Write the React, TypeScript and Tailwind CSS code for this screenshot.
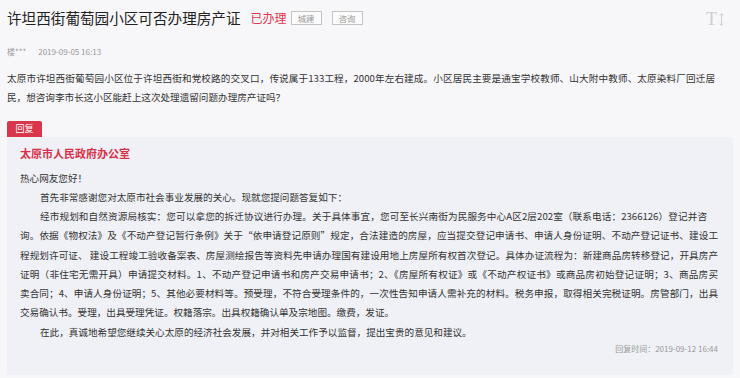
import React from "react";

const F = { fontFamily: '"Noto Sans CJK SC", "Noto Sans", sans-serif' };

export default function App() {
  return (
    <div
      className="w-[740px] h-[378px] bg-[#f7f6f9] px-[7px] pt-[8px] overflow-hidden text-[#333]"
      style={F}
    >
      {/* header */}
      <div className="flex items-center h-[20px]">
        <div className="text-[14.6px] leading-[20px] text-[#222] whitespace-nowrap">
          许坦西街葡萄园小区可否办理房产证
        </div>
        <div className="ml-[10px] text-[12px] leading-[20px] text-[#e6344d] whitespace-nowrap">
          已办理
        </div>
        <div className="ml-[4px] w-[31px] h-[14px] border border-[#c4c4c4] bg-[#fbfbfb] text-[8.4px] leading-[12px] text-[#999] flex items-center justify-center">
          城建
        </div>
        <div className="ml-[10px] w-[31px] h-[14px] border border-[#c4c4c4] bg-[#fbfbfb] text-[8.4px] leading-[12px] text-[#999] flex items-center justify-center">
          咨询
        </div>
        <div className="ml-auto mr-[9px] mt-[2px] flex items-end gap-[2px] text-[#cfcfcf]">
          <span
            className="text-[18px] leading-[18px]"
            style={{ fontFamily: '"Liberation Serif", serif' }}
          >
            T
          </span>
          <svg width="5" height="13" viewBox="0 0 5 13" className="mb-[2px]">
            <path d="M2.5 0.5 L2.5 12.5" stroke="#cfcfcf" strokeWidth="1" />
            <path d="M0.8 2.5 L2.5 0.5 L4.2 2.5" stroke="#cfcfcf" strokeWidth="0.9" fill="none" />
            <path d="M0.8 10.5 L2.5 12.5 L4.2 10.5" stroke="#cfcfcf" strokeWidth="0.9" fill="none" />
          </svg>
        </div>
      </div>

      {/* meta */}
      <div className="mt-[17px] flex text-[8px] leading-[14px] text-[#999]">
        <span>楼***</span>
        <span className="ml-[12px]">2019-09-05 16:13</span>
      </div>

      {/* question */}
      <div className="mt-[9.5px] text-[9.6px] leading-[19px] text-[#333]">
        <div className="w-[708px] whitespace-nowrap text-justify [text-align-last:justify]">
          太原市许坦西街葡萄园小区位于许坦西街和党校路的交叉口，传说属于133工程，2000年左右建成。小区居民主要是通宝学校教师、山大附中教师、太原染料厂回迁居
        </div>
        <div className="whitespace-nowrap">
          民，想咨询李市长这小区能赶上这次处理遗留问题办理房产证吗？
        </div>
      </div>

      {/* reply tag */}
      <div className="mt-[14.5px] w-[35px] h-[16px] bg-[#d9354c] rounded-t-[2px] text-white text-[9px] leading-[16px] flex items-center justify-center">
        回复
      </div>

      {/* reply box */}
      <div className="w-[726px] bg-[#eff1f6] pl-[13px] pr-[15px] pt-[6.5px] pb-[19px]">
        <div className="text-[11px] leading-[19px] font-bold text-[#d9304a]">
          太原市人民政府办公室
        </div>
        <div className="mt-[6px] text-[9.6px] leading-[19.25px] text-[#333]">
          <div className="whitespace-nowrap">热心网友您好！</div>
          <div className="whitespace-nowrap pl-[20px]">
            首先非常感谢您对太原市社会事业发展的关心。现就您提问题答复如下：
          </div>
          <div className="whitespace-nowrap pl-[20px] w-[687px] text-justify [text-align-last:justify]">
            经市规划和自然资源局核实：您可以拿您的拆迁协议进行办理。关于具体事宜，您可至长兴南街为民服务中心A区2层202室（联系电话：2366126）登记并咨
          </div>
          <div className="whitespace-nowrap w-[698px] text-justify [text-align-last:justify]">
            询。依据《物权法》及《不动产登记暂行条例》关于“依申请登记原则”规定，合法建造的房屋，应当提交登记申请书、申请人身份证明、不动产登记证书、建设工
          </div>
          <div className="whitespace-nowrap w-[698px] text-justify [text-align-last:justify]">
            程规划许可证、 建设工程竣工验收备案表、房屋测绘报告等资料先申请办理国有建设用地上房屋所有权首次登记。具体办证流程为：新建商品房转移登记，开具房产
          </div>
          <div className="whitespace-nowrap w-[698px] text-justify [text-align-last:justify]">
            证明（非住宅无需开具）申请提交材料。1、不动产登记申请书和房产交易申请书；2、《房屋所有权证》或《不动产权证书》或商品房初始登记证明；3、商品房买
          </div>
          <div className="whitespace-nowrap w-[698px] text-justify [text-align-last:justify]">
            卖合同；4、申请人身份证明；5、其他必要材料等。预受理，不符合受理条件的，一次性告知申请人需补充的材料。税务申报，取得相关完税证明。房管部门，出具
          </div>
          <div className="whitespace-nowrap">
            交易确认书。受理，出具受理凭证。权籍落宗。出具权籍确认单及宗地图。缴费，发证。
          </div>
          <div className="whitespace-nowrap pl-[20px]">
            在此，真诚地希望您继续关心太原的经济社会发展，并对相关工作予以监督，提出宝贵的意见和建议。
          </div>
        </div>
        <div className="w-[698px] text-right text-[8px] leading-[14px] text-[#999]">
          回复时间：2019-09-12 16:44
        </div>
      </div>
    </div>
  );
}
